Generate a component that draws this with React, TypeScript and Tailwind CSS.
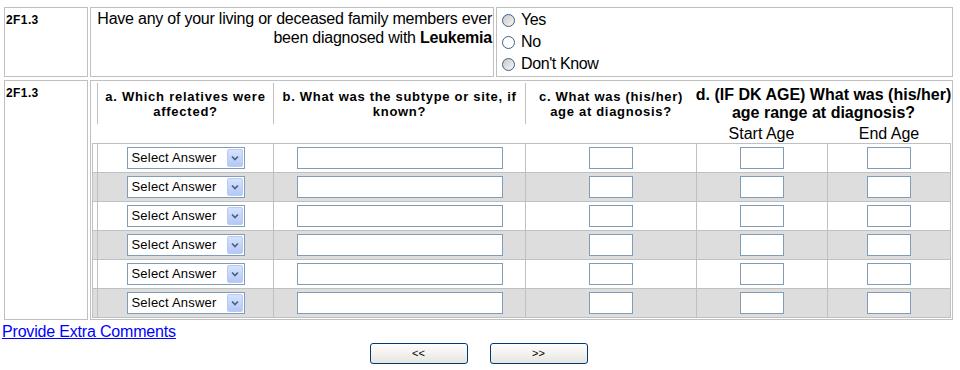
import type { ReactNode } from 'react';

const LINE = 'border-[#c0c0c0]';
const ROWS = [0, 1, 2, 3, 4, 5];

function Radio({ label, shaded }: { label: string; shaded?: boolean }) {
  return (
    <label className="flex h-[22px] items-center gap-[6px]">
      <span
        className={`h-[13px] w-[13px] shrink-0 rounded-full border border-[#3d5f86] ${
          shaded ? 'bg-linear-to-br from-[#c9c9c9] to-[#f7f7f7]' : 'bg-white'
        }`}
      />
      <span>{label}</span>
    </label>
  );
}

function SelectAnswer() {
  return (
    <div className="flex h-[22px] w-[118px] items-center border border-[#7f9db9] bg-white pl-[4px] pr-[1px] text-[13px]">
      <span className="flex-1 tracking-[0.2px]">Select Answer</span>
      <span className="flex h-[18px] w-[16px] items-center justify-center rounded-[2px] border border-[#b9cbf3] bg-linear-to-b from-[#d6e3fd] to-[#b4c8f6]">
        <svg width="8" height="6" viewBox="0 0 8 6">
          <path d="M1 1.5 L4 4.5 L7 1.5" fill="none" stroke="#4d6185" strokeWidth="1.7" />
        </svg>
      </span>
    </div>
  );
}

function Box({ w }: { w: string }) {
  return <input type="text" className={`h-[22px] ${w} border border-[#7f9db9] bg-white px-1 text-[13px] outline-none`} />;
}

function Cell({ w, children, last }: { w: string; children: ReactNode; last?: boolean }) {
  return (
    <div className={`flex ${w} items-center justify-center border-l ${last ? 'border-r' : ''} ${LINE}`}>
      {children}
    </div>
  );
}

function NavButton({ label }: { label: string }) {
  return (
    <button
      type="button"
      className="h-[21px] w-[98px] rounded-[3px] border border-[#003c74] bg-linear-to-b from-white to-[#e6e5df] text-[11px] text-black"
    >
      {label}
    </button>
  );
}

export default function App() {
  return (
    <div className="min-h-[370px] w-[960px] bg-white font-['Liberation_Sans',Arial,sans-serif] text-black">
      <div className="flex flex-col gap-[3px] pl-[4px] pt-[7px]">
        <div className="flex h-[70px] gap-[2px]">
          <div className={`w-[84px] border ${LINE} pl-[1px] pt-[3px] text-[12px] font-bold tracking-[0.4px]`}>2F1.3</div>
          <div
            className={`w-[404px] border ${LINE} pr-[1px] pt-[1px] text-right text-[16px] leading-[19px] tracking-[-0.23px] whitespace-nowrap`}
          >
            Have any of your living or deceased family members ever
            <br />
            been diagnosed with <b>Leukemia</b>
          </div>
          <div className={`w-[457px] border ${LINE} pl-[5px] pt-[1px] text-[16px] tracking-[-0.4px]`}>
            <Radio label="Yes" shaded />
            <Radio label="No" />
            <Radio label="Don't Know" shaded />
          </div>
        </div>

        <div className="flex h-[240px] gap-[2px]">
          <div className={`w-[84px] border ${LINE} pl-[1px] pt-[3px] text-[12px] font-bold tracking-[0.4px]`}>2F1.3</div>
          <div className={`w-[863px] border ${LINE} pt-[2px]`}>
            <div className="flex h-[41px] pl-[6px] text-center font-bold">
              <div className={`flex w-[176px] items-center justify-center border-l ${LINE} text-[13px] leading-[15px] tracking-[0.75px]`}>
                <span>
                  a. Which relatives were
                  <br />
                  affected?
                </span>
              </div>
              <div className={`flex w-[252px] items-center justify-center border-l ${LINE} text-[13px] leading-[15px] tracking-[0.7px]`}>
                <span className="whitespace-nowrap">
                  b. What was the subtype or site, if
                  <br />
                  known?
                </span>
              </div>
              <div className={`flex w-[171px] items-center justify-center border-l ${LINE} text-[13px] leading-[15px] tracking-[0.7px]`}>
                <span className="whitespace-nowrap">
                  c. What was (his/her)
                  <br />
                  age at diagnosis?
                </span>
              </div>
              <div className="flex w-[255px] items-center justify-center whitespace-nowrap text-[16px] leading-[18px]">
                <span>
                  d. (IF DK AGE) What was (his/her)
                  <br />
                  age range at diagnosis?
                </span>
              </div>
            </div>
            <div className="flex h-[19px] pl-[605px] text-[16px] leading-[19px]">
              <div className="w-[131px] text-center">Start Age</div>
              <div className="w-[124px] text-center">End Age</div>
            </div>

            <div className={`ml-[1px] w-[859px] border-b border-l ${LINE}`}>
              {ROWS.map((i) => (
                <div
                  key={i}
                  className={`flex h-[29px] border-t ${LINE} pl-[4px] ${i % 2 ? 'bg-[#dddddd]' : 'bg-white'}`}
                >
                  <Cell w="w-[176px]">
                    <SelectAnswer />
                  </Cell>
                  <Cell w="w-[252px]">
                    <Box w="w-[206px]" />
                  </Cell>
                  <Cell w="w-[171px]">
                    <Box w="w-[44px]" />
                  </Cell>
                  <Cell w="w-[131px]">
                    <Box w="w-[44px]" />
                  </Cell>
                  <Cell w="w-[124px]" last>
                    <Box w="w-[44px]" />
                  </Cell>
                </div>
              ))}
            </div>
          </div>
        </div>
      </div>

      <div className="pl-[2px] pt-[3px] text-[16px] leading-[18px] tracking-[-0.18px]">
        <a href="#" className="text-[#0000ff] underline">
          Provide Extra Comments
        </a>
      </div>
      <div className="flex w-[957px] justify-center gap-[22px] pt-[2px]">
        <NavButton label="<<" />
        <NavButton label=">>" />
      </div>
    </div>
  );
}
